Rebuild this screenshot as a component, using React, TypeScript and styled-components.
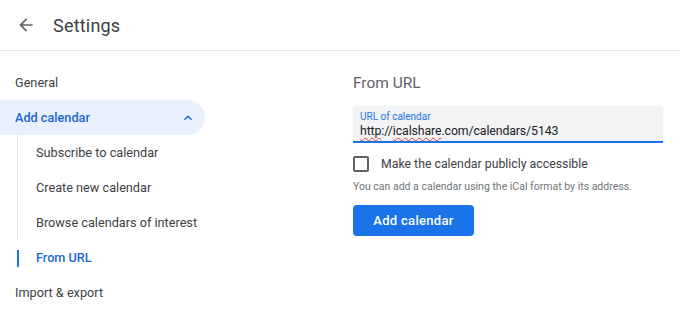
import styled, { createGlobalStyle } from 'styled-components';

const GlobalStyle = createGlobalStyle`
  html, body {
    margin: 0;
    padding: 0;
    background: #ffffff;
  }
  body {
    font-family: Roboto, "Liberation Sans", Arial, sans-serif;
    color: #3c4043;
  }
`;

const Page = styled.div`
  width: 680px;
  height: 336px;
  overflow: hidden;
`;

const Header = styled.header`
  height: 50px;
  border-bottom: 1px solid #e3e4e6;
  display: flex;
  align-items: center;
  gap: 17px;
  padding-left: 16px;
  box-sizing: content-box;
  svg {
    width: 20px;
    height: 20px;
    color: #5f6368;
  }
`;

const Title = styled.h1`
  margin: 0;
  font-size: 18px;
  font-weight: 400;
  color: #3c4043;
  letter-spacing: 0.2px;
`;

const Body = styled.div`
  display: grid;
  grid-template-columns: 353px 1fr;
`;

const Sidebar = styled.nav`
  padding-top: 14px;
  width: 205px;
`;

const NavItem = styled.div<{ $open?: boolean }>`
  height: 35px;
  display: flex;
  align-items: center;
  justify-content: space-between;
  padding: 0 9px 0 15px;
  font-size: 12.7px;
  color: ${({ $open }) => ($open ? '#1967d2' : '#3c4043')};
  font-weight: ${({ $open }) => ($open ? 500 : 400)};
  background: ${({ $open }) => ($open ? '#e8f0fe' : 'transparent')};
  border-radius: 0 17px 17px 0;
  svg {
    width: 16px;
    height: 16px;
    color: #1967d2;
  }
`;

const SubList = styled.div`
  margin-left: 17px;
`;

const SubItem = styled.div<{ $active?: boolean }>`
  position: relative;
  height: 35px;
  display: flex;
  align-items: center;
  padding-left: 18px;
  font-size: 12.7px;
  color: ${({ $active }) => ($active ? '#1967d2' : '#3c4043')};
  font-weight: ${({ $active }) => ($active ? 500 : 400)};
  border-left: 1px solid ${({ $active }) => ($active ? 'transparent' : '#e3e4e6')};
  &::before {
    content: '';
    display: ${({ $active }) => ($active ? 'block' : 'none')};
    position: absolute;
    left: -1px;
    top: 10px;
    width: 2px;
    height: 17px;
    background: #1a73e8;
  }
`;

const Main = styled.main`
  padding-top: 21px;
  width: 310px;
`;

const SectionTitle = styled.h2`
  margin: 0 0 12px;
  font-size: 15.5px;
  font-weight: 400;
  color: #5f6368;
  line-height: 22px;
`;

const Field = styled.div`
  background: #f1f3f4;
  border-bottom: 2px solid #1a73e8;
  border-radius: 4px 4px 0 0;
  padding: 5px 7px 2px;
  height: 28px;
`;

const FieldLabel = styled.div`
  font-size: 10px;
  color: #1a73e8;
  line-height: 12px;
`;

const FieldValue = styled.div`
  font-size: 12.3px;
  letter-spacing: -0.1px;
  color: #202124;
  line-height: 16px;
`;

const Misspelled = styled.span`
  text-decoration: underline wavy #e53935;
  text-decoration-thickness: 1px;
  text-underline-offset: 2px;
`;

const CheckRow = styled.label`
  display: flex;
  align-items: center;
  gap: 12px;
  margin-top: 13px;
  font-size: 12.3px;
  color: #3c4043;
`;

const Box = styled.span`
  width: 12px;
  height: 12px;
  border: 2px solid #5f6368;
  border-radius: 2px;
`;

const Hint = styled.p`
  margin: 8px 0 0;
  font-size: 10.5px;
  color: #70757a;
  line-height: 14px;
`;

const Button = styled.button`
  margin-top: 11px;
  width: 121px;
  height: 31px;
  border: none;
  border-radius: 4px;
  background: #1a73e8;
  color: #ffffff;
  font-family: inherit;
  font-size: 13px;
  font-weight: 500;
  letter-spacing: 0.3px;
  cursor: pointer;
`;

const BackArrow = () => (
  <svg viewBox="0 0 24 24" fill="currentColor">
    <path d="M20 11H7.83l5.59-5.59L12 4l-8 8 8 8 1.41-1.41L7.83 13H20v-2z" />
  </svg>
);

const ChevronUp = () => (
  <svg viewBox="0 0 24 24" fill="currentColor">
    <path d="M7.41 15.41L12 10.83l4.59 4.58L18 14l-6-6-6 6z" />
  </svg>
);

const subItems = [
  'Subscribe to calendar',
  'Create new calendar',
  'Browse calendars of interest',
  'From URL',
];

export default function App() {
  return (
    <Page>
      <GlobalStyle />
      <Header>
        <BackArrow />
        <Title>Settings</Title>
      </Header>
      <Body>
        <Sidebar>
          <NavItem>General</NavItem>
          <NavItem $open>
            Add calendar
            <ChevronUp />
          </NavItem>
          <SubList>
            {subItems.map((s) => (
              <SubItem key={s} $active={s === 'From URL'}>
                {s}
              </SubItem>
            ))}
          </SubList>
          <NavItem>Import &amp; export</NavItem>
        </Sidebar>
        <Main>
          <SectionTitle>From URL</SectionTitle>
          <Field>
            <FieldLabel>URL of calendar</FieldLabel>
            <FieldValue>
              <Misspelled>http</Misspelled>://<Misspelled>icalshare</Misspelled>
              .com/calendars/5143
            </FieldValue>
          </Field>
          <CheckRow>
            <Box />
            Make the calendar publicly accessible
          </CheckRow>
          <Hint>You can add a calendar using the iCal format by its address.</Hint>
          <Button>Add calendar</Button>
        </Main>
      </Body>
    </Page>
  );
}
